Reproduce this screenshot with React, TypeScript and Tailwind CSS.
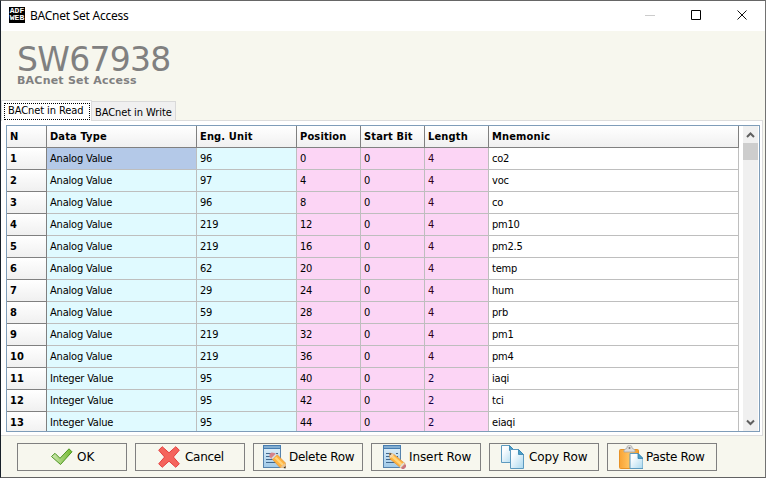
import React from "react";

const rows: [string, string, string, string, string][] = [
  ["Analog Value", "96", "0", "4", "co2"],
  ["Analog Value", "97", "4", "4", "voc"],
  ["Analog Value", "96", "8", "4", "co"],
  ["Analog Value", "219", "12", "4", "pm10"],
  ["Analog Value", "219", "16", "4", "pm2.5"],
  ["Analog Value", "62", "20", "4", "temp"],
  ["Analog Value", "29", "24", "4", "hum"],
  ["Analog Value", "59", "28", "4", "prb"],
  ["Analog Value", "219", "32", "4", "pm1"],
  ["Analog Value", "219", "36", "4", "pm4"],
  ["Integer Value", "95", "40", "2", "iaqi"],
  ["Integer Value", "95", "42", "2", "tci"],
  ["Integer Value", "95", "44", "2", "eiaqi"],
];

const cols = "grid grid-cols-[40px_150px_100px_64px_64px_64px_250px]";
const head = "h-[22px] border-r border-b border-[#808080] bg-linear-to-b from-white to-[#f0f0f0] pl-[3px] leading-[22px] font-bold tracking-[0.15px] whitespace-nowrap";
const cell = "h-[22px] border-r border-b border-[#bebebe] pl-[3px] leading-[22px] tracking-[-0.2px] whitespace-nowrap";
const cyan = cell + " bg-[#e0faff]";
const pink = cell + " bg-[#fcd5f5]";

function OkIcon() {
  return (
    <svg className="shrink-0" width="24" height="24" viewBox="0 0 24 24">
      <defs>
        <linearGradient id="ok" x1="0" x2="1"><stop offset="0" stopColor="#cfe8b4" /><stop offset="1" stopColor="#72b82c" /></linearGradient>
      </defs>
      <path d="M1.5 11.5 5 8.3l5 5L19 3.8l3 3L10.5 19.5Z" fill="url(#ok)" stroke="#4d9622" strokeLinejoin="round" />
    </svg>
  );
}

function CancelIcon() {
  return (
    <svg className="shrink-0" width="24" height="24" viewBox="0 0 24 24">
      <path d="m1.7 5.2 3.5-3.5 6.8 6.1 6.8-6.1 3.5 3.5-5.9 6.8 5.9 6.8-3.5 3.5-6.8-6.1-6.8 6.1-3.5-3.5L7.6 12Z" fill="#f4645c" stroke="#e53d3d" strokeLinejoin="round" />
    </svg>
  );
}

function EditIcon({ insert = false }: { insert?: boolean }) {
  const id = insert ? "insertPage" : "deletePage";
  return (
    <svg className="shrink-0" width="24" height="24" viewBox="0 0 24 24">
      <defs>
        <linearGradient id={id} x1="0" y1="0" x2="0" y2="1"><stop offset="0" stopColor="#e2f1fa" /><stop offset="1" stopColor="#9fc9e8" /></linearGradient>
      </defs>
      <rect x="1.5" y=".5" width="17" height="22" fill={`url(#${id})`} stroke="#5682ab" />
      <path d="M1 0h18v4H1z" fill="#477db1" />
      <path d="M2 1h16v2H2z" fill="#83aed1" />
      <path d="M4 8.5h5m5 0h2M4 11.5h4m7 0h1M4 14.5h8M4 17.5h11" stroke="#41688e" />
      {insert ? (
        <>
          <path d="m7.5 8 .5 6 11 9 4-4.5L12 9.5Z" fill="#ffb23e" stroke="#d98c30" strokeWidth=".6" />
          <path d="m10.5 11.5 10 9" stroke="#ffd47b" strokeWidth="2.4" />
          <path d="m7.5 8 .5 5 2-.8 2-2.7Z" fill="#f3d7ae" /><path d="m7.5 8 .2 2.6 2-1.8Z" fill="#333" />
          <path d="m19 23 4-4 1 1v2l-2 2h-2Z" fill="#c9747e" /><path d="m18 22.5 4-4.5" stroke="#dce2e6" strokeWidth="1.5" />
        </>
      ) : (
        <>
          <path d="m10 14 8 8.5h5.5V18L15 9.5Z" fill="#ffb23e" stroke="#d98c30" strokeWidth=".6" />
          <path d="m13.5 12.5 7.5 7.5" stroke="#ffd47b" strokeWidth="2.4" />
          <path d="m7.5 9 2-1.5 3 .5 2.5 1.5-5 4.5-2.5-2Z" fill="#d4818a" /><path d="m10 13.5 4.5-4.5" stroke="#d6dde5" strokeWidth="1.7" />
          <path d="m18 22.5 5.5.5v-5Z" fill="#e7c79b" /><path d="m21.5 23 2 .5v-2.5Z" fill="#222" />
        </>
      )}
    </svg>
  );
}

function Page({ id, x, y, h = 18 }: { id: string; x: number; y: number; h?: number }) {
  return (
    <g transform={`translate(${x} ${y})`}>
      <defs>
        <linearGradient id={id} x1="0" y1="0" x2="1" y2="1"><stop offset=".25" stopColor="#fbfdff" /><stop offset="1" stopColor="#a9d8ee" /></linearGradient>
      </defs>
      <path d={`M.5.5h8l5 5v${h - 5}H.5Z`} fill={`url(#${id})`} stroke="#5d9abf" />
      <path d="M8.5.5v5h5Z" fill="#4aa0ca" stroke="#3481ae" strokeWidth=".8" />
    </g>
  );
}

function CopyIcon() {
  return <svg className="shrink-0" width="25" height="24" viewBox="0 0 25 24"><Page id="pageBack" x={1} y={0} h={17} /><Page id="pageFront" x={10} y={4} h={19} /></svg>;
}

function PasteIcon() {
  return (
    <svg className="shrink-0" width="25" height="24" viewBox="0 0 25 24">
      <defs><linearGradient id="board" x1="0" x2="1"><stop stopColor="#f9a334" /><stop offset=".5" stopColor="#ffc25f" /><stop offset="1" stopColor="#f89d29" /></linearGradient></defs>
      <rect x="1.5" y="4.5" width="19" height="19" rx="1" fill="url(#board)" stroke="#e79226" />
      <path d="M6 7V5l3-2c0-4 5-4 5 0l3 2v2Z" fill="#ddd" stroke="#a5a5a5" strokeWidth=".8" />
      <circle cx="11.5" cy="3" r="1" fill="#777" />
      <Page id="pastePage" x={11.5} y={8} h={15} />
    </svg>
  );
}

const button = "flex h-7 w-[110px] items-center border border-[#808080] font-['DejaVu_Sans',Verdana,sans-serif] text-[12px] leading-none text-black whitespace-nowrap";

export default function App() {
  return (
    <main className="flex h-[478px] w-[766px] flex-col overflow-hidden border border-t-[#666] border-r-[#727272] border-b-[#626262] border-l-[#18202a] bg-[#f7f7ee] font-['DejaVu_Sans_Condensed','DejaVu_Sans',sans-serif] text-[11px] text-black">
      <header className="flex h-[30px] shrink-0 items-start bg-white">
        <div className="mt-[6px] ml-2 h-4 w-4 overflow-hidden bg-black text-center font-['Liberation_Mono',monospace] text-[8px] leading-[7px] font-bold text-white">
          <div>ADF</div><div>WEB</div>
        </div>
        <h1 className="mt-[6px] ml-[5px] font-['Noto_Sans',sans-serif] text-[12px] leading-[17px] tracking-[-0.25px]">BACnet Set Access</h1>
        <div className="mt-[9px] mr-[17px] ml-auto flex gap-[35px]">
          <svg width="11" height="11"><path d="M0 5.5h10" stroke="#ccc" /></svg>
          <svg width="11" height="11"><path d="M.5.5h9v9h-9z" fill="none" stroke="#000" /></svg>
          <svg width="11" height="11"><path d="m.5.5 9 9m0-9-9 9" stroke="#111" /></svg>
        </div>
      </header>

      <section className="h-[69px] shrink-0 pt-[12px] pl-4 font-['DejaVu_Sans',Verdana,sans-serif] text-[#808080]">
        <div className="h-[32px] text-[33px] leading-[34px] tracking-[-0.7px]">SW67938</div>
        <div className="pt-px text-[11px] leading-[10px] font-bold tracking-[0.22px]">BACnet Set Access</div>
      </section>

      <nav className="relative z-10 flex h-5 shrink-0 items-end tracking-[-0.08px]">
        <div className="-mb-px h-[21px] w-[91px] border border-b-0 border-[#dcdcdc] bg-white p-[2px]">
          <div className="h-[17px] w-[86px] border border-dotted border-black pl-[3px] leading-[14px] whitespace-nowrap">BACnet in Read</div>
        </div>
        <div className="h-[19px] w-[84px] border border-b-0 border-l-0 border-[#d9d9d9] bg-[#f0f0f0] pl-[3px] leading-[21px] whitespace-nowrap">BACnet in Write</div>
      </nav>

      <section className="h-[316px] w-[762px] shrink-0 border border-l-0 border-[#dcdcdc] bg-white pt-1 pl-[5px]">
        <div className="flex h-[307px] w-[754px] overflow-hidden border border-[#7f9db9] bg-white">
          <div className="w-[732px] shrink-0">
            <div className={cols + " h-[22px]"}>
              {["N", "Data Type", "Eng. Unit", "Position", "Start Bit", "Length", "Mnemonic"].map((label) => (
                <div className={head} key={label}>{label}</div>
              ))}
            </div>
            {rows.map((row, i) => (
              <div className={cols + " h-[22px]"} key={i}>
                <div className={head}>{i + 1}</div>
                <div className={i ? cyan : cell + " bg-[#b4c9e8]"}>{row[0]}</div>
                <div className={cyan}>{row[1]}</div>
                <div className={pink}>{row[2]}</div>
                <div className={pink}>0</div>
                <div className={pink + (row[3] === "4" ? " text-[#300018]" : " text-[#100040]")}>{row[3]}</div>
                <div className={cell}>{row[4]}</div>
              </div>
            ))}
          </div>
          <div className="ml-1 flex h-full w-[15px] flex-col items-center bg-[#f0f0f0]">
            <svg className="mt-[6px] shrink-0" width="9" height="7"><path d="m1 5 3.5-3.5L8 5" fill="none" stroke="#606060" strokeWidth="2" /></svg>
            <div className="mt-1 h-[17px] w-full shrink-0 bg-[#cdcdcd]" />
            <svg className="mt-auto mb-[5px] shrink-0" width="9" height="7"><path d="M1 1.5 4.5 5 8 1.5" fill="none" stroke="#606060" strokeWidth="2" /></svg>
          </div>
        </div>
      </section>

      <footer className="mt-[7px] ml-4 flex gap-2">
        <button className={button + " gap-[3px] pl-8"}><OkIcon />OK</button>
        <button className={button + " gap-1 pl-[21px] tracking-[-0.3px]"}><CancelIcon />Cancel</button>
        <button className={button + " gap-[3px] pl-[8px] tracking-[-0.28px]"}><EditIcon />Delete Row</button>
        <button className={button + " gap-[3px] pl-[10px] tracking-[-0.1px]"}><EditIcon insert />Insert Row</button>
        <button className={button + " gap-[4px] pl-[10px] tracking-[-0.1px]"}><CopyIcon />Copy Row</button>
        <button className={button + " gap-[3px] pl-[10px] tracking-[-0.28px]"}><PasteIcon />Paste Row</button>
      </footer>
    </main>
  );
}
